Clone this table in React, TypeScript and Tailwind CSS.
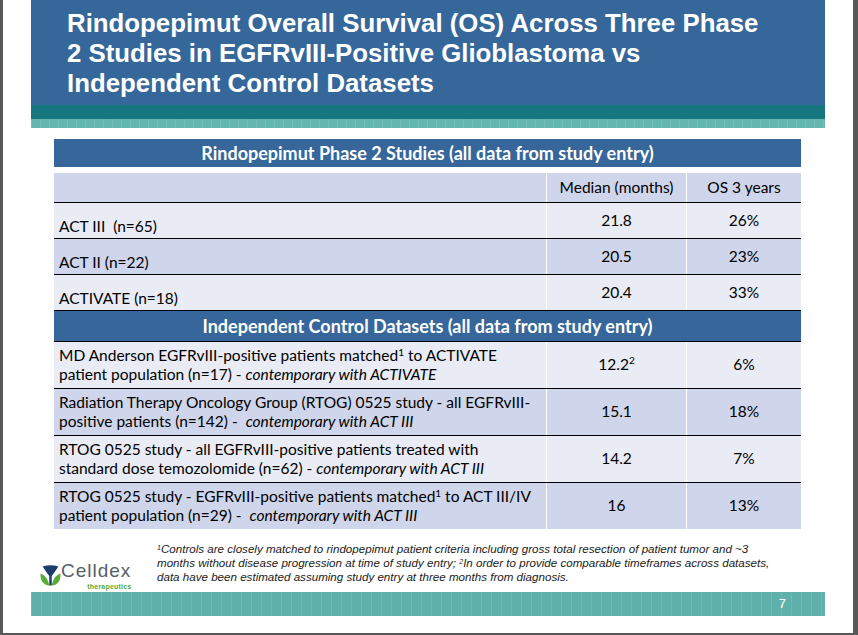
const topRows = [
  { label: "ACT III  (n=65)", median: "21.8", os: "26%", bg: "bg-[#e9ebf5]" },
  { label: "ACT II (n=22)", median: "20.5", os: "23%", bg: "bg-[#cfd5ea]" },
  { label: "ACTIVATE (n=18)", median: "20.4", os: "33%", bg: "bg-[#e9ebf5]" },
];

const controlRows = [
  {
    l1: "MD Anderson EGFRvIII-positive patients matched",
    sup1: true,
    l1b: " to ACTIVATE",
    l2: "patient population (n=17) - ",
    l2i: "contemporary with ACTIVATE",
    median: "12.2",
    medSup: "2",
    os: "6%",
    bg: "bg-[#e9ebf5]",
  },
  {
    l1: "Radiation Therapy Oncology Group (RTOG) 0525 study - all EGFRvIII-",
    sup1: false,
    l1b: "",
    l2: "positive patients (n=142) -  ",
    l2i: "contemporary with ACT III",
    median: "15.1",
    medSup: "",
    os: "18%",
    bg: "bg-[#cfd5ea]",
  },
  {
    l1: "RTOG 0525 study - all EGFRvIII-positive patients treated with",
    sup1: false,
    l1b: "",
    l2: "standard dose temozolomide (n=62) - ",
    l2i: "contemporary with ACT III",
    median: "14.2",
    medSup: "",
    os: "7%",
    bg: "bg-[#e9ebf5]",
  },
  {
    l1: "RTOG 0525 study - EGFRvIII-positive patients matched",
    sup1: true,
    l1b: " to ACT III/IV",
    l2: "patient population (n=29) -  ",
    l2i: "contemporary with ACT III",
    median: "16",
    medSup: "",
    os: "13%",
    bg: "bg-[#cfd5ea]",
  },
];

function CelldexMark() {
  return (
    <svg width="21" height="22" viewBox="0 0 20 21">
      <path d="M8.8 20.5 C3 20 0 15.5 0.5 9 C4.5 10.5 7.8 14 8.8 20.5 Z" fill="#5aab3c" />
      <path d="M11.2 20.5 C17 20 20 15.5 19.5 9 C15.5 10.5 12.2 14 11.2 20.5 Z" fill="#5aab3c" />
      <path d="M2.5 2.5 Q10 0 17.5 2.5 Q14 8 11.2 11.5 L11.2 20.5 L8.8 20.5 L8.8 11.5 Q6 8 2.5 2.5 Z" fill="#1d3d6b" />
    </svg>
  );
}

export default function App() {
  return (
    <div className="w-[858px] h-[635px] bg-[#585858] pl-[3px] pr-[5px] pb-[2px] font-['Liberation_Sans',Arial,sans-serif]">
      <div className="h-full bg-white flex flex-col">
        {/* title banner */}
        <div className="ml-[28px] w-[794px]">
          <div className="h-[105px] bg-[#35679b] pl-[36px] pt-[8px]">
            <h1 className="text-white font-bold text-[25.8px] leading-[30px]">
              Rindopepimut Overall Survival (OS) Across Three Phase
              <br />2 Studies in EGFRvIII-Positive Glioblastoma vs
              <br />Independent Control Datasets
            </h1>
          </div>
          <div className="h-[14px] bg-[#16777f]" />
          <div className="h-[9px] bg-[#66b6b0] bg-[repeating-linear-gradient(90deg,#74bfb9_0px,#74bfb9_1px,transparent_1px,transparent_9px)]" />
        </div>

        {/* table */}
        <div className="ml-[51px] w-[747px] mt-[11px] font-['Lato','Open_Sans',sans-serif] text-[15.5px] text-black">
          <div className="h-[28px] bg-[#36669a] flex items-center justify-center text-white font-bold text-[18px]">
            Rindopepimut Phase 2 Studies (all data from study entry)
          </div>
          <div className="h-[6px] bg-white" />
          <div className="grid grid-cols-[492px_140px_115px] h-[30px] bg-[#cfd5ea] border-b border-black">
            <div />
            <div className="border-l border-white flex items-center justify-center">Median (months)</div>
            <div className="border-l border-white flex items-center justify-center">OS 3 years</div>
          </div>
          {topRows.map(r => (
            <div key={r.label} className={`grid grid-cols-[492px_140px_115px] h-[36px] border-b border-black ${r.bg}`}>
              <div className="flex items-end pl-[5px] whitespace-pre">{r.label}</div>
              <div className="border-l border-white flex items-center justify-center">{r.median}</div>
              <div className="border-l border-white flex items-center justify-center">{r.os}</div>
            </div>
          ))}
          <div className="h-[31px] bg-[#36669a] flex items-center justify-center text-white font-bold text-[18px] border-b border-black">
            Independent Control Datasets (all data from study entry)
          </div>
          {controlRows.map((r, i) => (
            <div
              key={r.l1}
              className={`grid grid-cols-[492px_140px_115px] ${i === controlRows.length - 1 ? "h-[46px]" : "h-[47px] border-b border-black"} ${r.bg}`}
            >
              <div className="flex flex-col justify-center pl-[5px] leading-[19px] whitespace-pre">
                <div>
                  {r.l1}
                  {r.sup1 && <sup className="text-[10px]">1</sup>}
                  {r.l1b}
                </div>
                <div>
                  {r.l2}
                  <i>{r.l2i}</i>
                </div>
              </div>
              <div className="border-l border-white flex items-center justify-center">
                {r.median}
                {r.medSup && <sup className="text-[10px]">{r.medSup}</sup>}
              </div>
              <div className="border-l border-white flex items-center justify-center">{r.os}</div>
            </div>
          ))}
        </div>

        {/* footnote + logo */}
        <div className="flex mt-[13px] h-[50px]">
          <div className="w-[154px] flex items-end pb-[1px] pl-[37px]">
            <div className="mb-[5px]">
              <CelldexMark />
            </div>
            <div className="flex flex-col items-end">
              <span className="text-[19px] leading-[20px] text-[#55606a] tracking-[1px]">Celldex</span>
              <span className="mt-[2px] text-[7px] leading-[8px] font-bold text-[#5aab3c] tracking-[0.2px]">therapeutics</span>
            </div>
          </div>
          <p className="italic text-[11.6px] leading-[14px] text-[#1a1a1a]">
            <sup className="text-[7px]">1</sup>Controls are closely matched to rindopepimut patient criteria including gross total resection of patient tumor and ~3
            <br />months without disease progression at time of study entry; <sup className="text-[7px]">2</sup>In order to provide comparable timeframes across datasets,
            <br />data have been estimated assuming study entry at three months from diagnosis.
          </p>
        </div>

        {/* bottom bar */}
        <div className="ml-[28px] w-[794px] h-[24px] bg-[#5fb0aa] bg-[repeating-linear-gradient(90deg,#6cbab4_0px,#6cbab4_1px,transparent_1px,transparent_10px)] flex items-center justify-end pr-[39px]">
          <span className="text-white text-[13px]">7</span>
        </div>
      </div>
    </div>
  );
}
